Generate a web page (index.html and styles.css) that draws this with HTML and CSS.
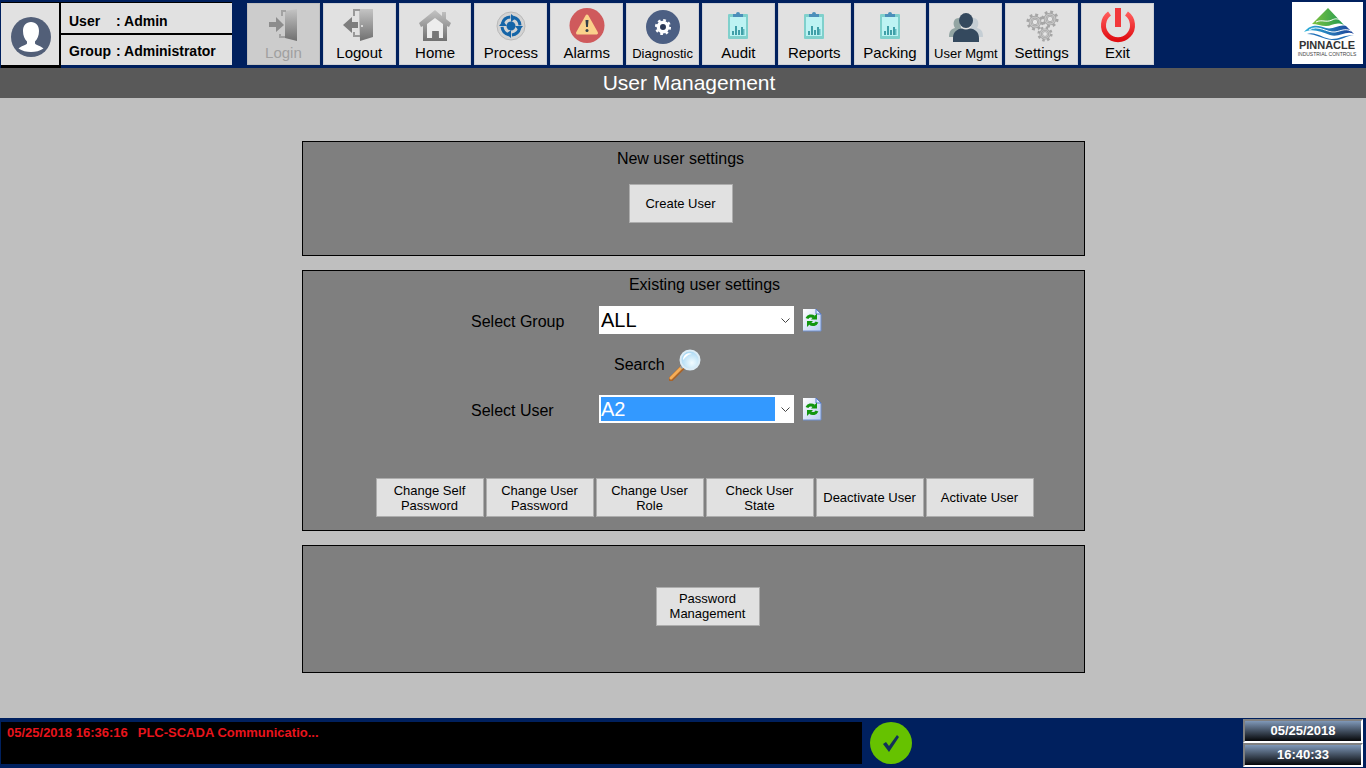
FILE: index.html
```html
<!DOCTYPE html>
<html lang="en">
<head>
    <meta charset="UTF-8">
    <meta name="viewport" content="width=device-width, initial-scale=1.0">
    <title>User Management</title>
    <link rel="stylesheet" href="styles.css">
</head>
<body>
    <!-- shared gradients and icons -->
    <svg class="defs" width="0" height="0" aria-hidden="true">
        <defs>
            <linearGradient id="grey" x1="0" y1="0" x2="0" y2="1">
                <stop offset="0" stop-color="#c4c4c4"/>
                <stop offset="1" stop-color="#707070"/>
            </linearGradient>
            <linearGradient id="red" x1="0" y1="0" x2="0" y2="1">
                <stop offset="0" stop-color="#ff5a5a"/>
                <stop offset="1" stop-color="#e00d12"/>
            </linearGradient>
            <linearGradient id="page" x1="0" y1="0" x2="1" y2="1">
                <stop offset="0" stop-color="#ffffff"/>
                <stop offset="1" stop-color="#b9cdf2"/>
            </linearGradient>
            <radialGradient id="lens" cx="0.6" cy="0.65" r="0.7">
                <stop offset="0" stop-color="#f2fcff"/>
                <stop offset="1" stop-color="#9fd3f2"/>
            </radialGradient>
            <linearGradient id="peak" x1="0" y1="0" x2="1" y2="0">
                <stop offset="0" stop-color="#7fc241"/>
                <stop offset="1" stop-color="#1f9a50"/>
            </linearGradient>
            <linearGradient id="wave" x1="0" y1="0" x2="1" y2="0">
                <stop offset="0" stop-color="#2fb3dc"/>
                <stop offset="1" stop-color="#1c3f96"/>
            </linearGradient>
            <symbol id="clipboard" viewBox="0 0 40 38">
                <rect x="10" y="8" width="20" height="25" rx="1" fill="#7fd0cc"/>
                <rect x="12" y="11" width="16" height="19" fill="#bdf3f3"/>
                <path d="M15 8h3a2 2 0 0 1 4 0h3v3H15z" fill="#4b8fba"/>
                <path d="M14 25h2v4h-2zM17 20h2v9h-2zM20 24h2v5h-2zM23 21h2v8h-2z" fill="#3f9fa8"/>
                <path d="M25 23h1.500v6H25z" fill="#62bcc0"/>
            </symbol>
            <symbol id="refresh" viewBox="0 0 20 24">
                <path d="M1 1h13l5 5v17H1z" fill="url(#page)"/>
                <path d="M1 23h18V6" fill="none" stroke="#6f8fd0"/>
                <path d="M14 1v5h5z" fill="#dbe7ff" stroke="#5478c8"/>
                <path d="M5 10.500c1-2.500 4.500-3.500 7-1.500" fill="none" stroke="#12960f" stroke-width="3"/>
                <path d="M15 5.500v6H9z" fill="#12960f"/>
                <path d="M15 14c-1 2.500-4.500 3.500-7 1.500" fill="none" stroke="#12960f" stroke-width="3"/>
                <path d="M5 19v-6h6z" fill="#12960f"/>
            </symbol>
            <symbol id="gear" viewBox="0 0 20 20">
                <circle cx="10" cy="10" r="8" fill="none" stroke="currentColor" stroke-width="3" stroke-dasharray="3.140 3.140"/>
                <circle cx="10" cy="10" r="5.500" fill="none" stroke="currentColor" stroke-width="4"/>
            </symbol>
            <symbol id="cog" viewBox="0 0 20 20">
                <circle cx="10" cy="10" r="8" fill="none" stroke="#a6a6a6" stroke-width="3" stroke-dasharray="3.140 3.140"/>
                <circle cx="10" cy="10" r="5.500" fill="#cfcfcf" stroke="#a0a0a0" stroke-width="3"/>
                <circle cx="10" cy="10" r="5.500" fill="none" stroke="#c6c6c6" stroke-width="1.500"/>
                <circle cx="10" cy="10" r="3" fill="#e6e6e6" stroke="#a8a8a8"/>
            </symbol>
        </defs>
    </svg>

    <header class="topbar">
        <div class="user-card">
            <div class="avatar">
                <svg width="40" height="40" viewBox="0 0 40 40">
                    <circle cx="20" cy="20" r="20" fill="#525f78"/>
                    <path d="M20 5c5 0 8 3.500 8 9 0 4.500-1.500 8-4 10.500v2c1.500 1.800 6 2.500 8.500 5C29 34 24.500 35 20 35S11 34 7.500 31.500c2.500-2.500 7-3.200 8.500-5v-2c-2.500-2.500-4-6-4-10.500 0-5.500 3-9 8-9z" fill="#fff"/>
                </svg>
            </div>
            <div class="user-info">
                <p><span class="key">User</span>: Admin</p>
                <p><span class="key">Group</span>: Administrator</p>
            </div>
        </div>

        <nav class="menu">
            <button type="button" disabled>
                <svg viewBox="0 0 40 38">
                    <path d="M6 16h7v-5l8 8-8 7v-5H6z" fill="#8c8c8c"/>
                    <path d="M22 5l12-2v32l-12-3z" fill="url(#grey)"/>
                    <path d="M19 10V5h4M17 28v3h5" fill="none" stroke="#a2a2a2" stroke-width="2"/>
                </svg>
                Login
            </button>
            <button type="button">
                <svg viewBox="0 0 40 38">
                    <path d="M19 16h-6v-5l-9 8 9 8v-5h6z" fill="#7d7d7d"/>
                    <path d="M20 3h14v28l-13 4z" fill="url(#grey)"/>
                    <path d="M15 10V4h6M15 26v4h6" fill="none" stroke="#999" stroke-width="2"/>
                    <circle cx="23" cy="20" r="1" fill="#eee"/>
                </svg>
                Logout
            </button>
            <button type="button">
                <svg viewBox="0 0 40 38">
                    <path d="M20 4L4 17l2 4 2-1v15h24V20l2 1 2-4-5-4V6h-4v4z" fill="url(#grey)"/>
                    <path d="M20 12l-8 6v14h5v-7h7v7h4V18z" fill="#ededed"/>
                    <path d="M18 25h5v7h-5z" fill="#777"/>
                </svg>
                Home
            </button>
            <button type="button">
                <svg viewBox="0 0 40 38">
                    <circle cx="20" cy="20" r="14" fill="#d3d3d3" stroke="#b9b9b9" stroke-width="1"/>
                    <circle cx="20" cy="20" r="9" fill="none" stroke="#1565a8" stroke-width="3" stroke-dasharray="11.140 3" stroke-dashoffset="-2"/>
                    <path d="M20 8l5 4-5 4zM32 20l-4 5-4-5zM20 32l-5-4 5-4zM8 20l4-5 4 5z" fill="#1565a8"/>
                    <circle cx="20" cy="20" r="4.500" fill="#1565a8"/>
                </svg>
                Process
            </button>
            <button type="button">
                <svg viewBox="0 0 40 38">
                    <circle cx="20" cy="19.500" r="17.500" fill="#cf5a5c"/>
                    <path d="M20 10l9.500 17h-19z" fill="#fbd18b" stroke="#fbd18b" stroke-width="3" stroke-linejoin="round"/>
                    <path d="M18.500 14h3l-.6 7h-1.800z" fill="#333f48"/>
                    <circle cx="20" cy="24.500" r="1.500" fill="#333f48"/>
                </svg>
                Alarms
            </button>
            <button type="button" class="small">
                <svg viewBox="0 0 40 38">
                    <circle cx="20" cy="21" r="17" fill="#4c5f83"/>
                    <circle cx="20" cy="21" r="4" fill="#2b3856"/>
                    <use href="#gear" x="11.500" y="12.500" width="17" height="17" color="#fff"/>
                </svg>
                Diagnostic
            </button>
            <button type="button">
                <svg viewBox="0 0 40 38"><use href="#clipboard" width="40" height="38"/></svg>
                Audit
            </button>
            <button type="button">
                <svg viewBox="0 0 40 38"><use href="#clipboard" width="40" height="38"/></svg>
                Reports
            </button>
            <button type="button">
                <svg viewBox="0 0 40 38"><use href="#clipboard" width="40" height="38"/></svg>
                Packing
            </button>
            <button type="button" class="small">
                <svg viewBox="0 0 40 38">
                    <path d="M3 31c0-6 2-8 6-9-3-5-1-10 4-10l4 19z" fill="#93a5a3"/>
                    <path d="M37 31c0-6-2-8-6-9 3-5 1-10-4-10l-4 19z" fill="#c5ced4"/>
                    <ellipse cx="20" cy="14.500" rx="7" ry="7.500" fill="#34495e"/>
                    <path d="M7 36v-4c0-6 4-9 9-9.500q4 2 8 0c5 .5 9 3.500 9 9.500v4z" fill="#34495e"/>
                </svg>
                User Mgmt
            </button>
            <button type="button">
                <svg viewBox="0 0 40 38">
                    <use href="#cog" x="4" y="7" width="18" height="18"/>
                    <use href="#cog" x="19" y="4" width="18" height="18"/>
                    <use href="#cog" x="15" y="20" width="16" height="16"/>
                </svg>
                Settings
            </button>
            <button type="button">
                <svg viewBox="0 0 40 38">
                    <path d="M11.500 7.500a14.500 14.500 0 1 0 17 0" fill="none" stroke="url(#red)" stroke-width="5"/>
                    <path d="M17 2h6v19h-6z" fill="#f2383b"/>
                </svg>
                Exit
            </button>
        </nav>

        <div class="logo">
            <svg width="71" height="62" viewBox="0 0 71 62" role="img" aria-label="Pinnacle Industrial Controls">
                <path d="M36 6l16 17c-8-4-12 1-18 1-5 0-9-2-14-2z" fill="url(#peak)"/>
                <path d="M24 20c6-3 10 1 16-2 4-2 6-1 8 0" fill="none" stroke="#fff" stroke-width="1"/>
                <path d="M12 30c8-9 15-6 22-4 7 2 13-4 20-2l8 8c-8-4-15 4-24 1-9-3-17-7-26-3z" fill="url(#wave)"/>
                <path d="M15 32c9-3 16 5 25 5 7 0 12-4 22-4-9 1-13 6-22 5-9-1-16-6-25-6z" fill="#1f6fb8"/>
                <path d="M17 28c9-6 18 3 26 2 6-1 10-4 16-1" fill="none" stroke="#fff" stroke-width="1"/>
                <text x="35" y="47" class="logo-name">PINNACLE</text>
                <text x="35" y="54" class="logo-sub">INDUSTRIAL CONTROLS</text>
            </svg>
        </div>
    </header>

    <h1>User Management</h1>

    <main>
        <section class="panel new-user">
            <h2>New user settings</h2>
            <button type="button" class="btn">Create User</button>
        </section>

        <section class="panel existing-user">
            <h2>Existing user settings</h2>
            <form class="filters">
                <label for="group">Select Group</label>
                <div class="combo">
                    <select id="group">
                        <option selected>ALL</option>
                    </select>
                    <svg width="9" height="6" viewBox="0 0 9 6"><path d="M.5.500l4 4 4-4" fill="none" stroke="#444"/></svg>
                </div>
                <button type="button" class="icon-btn" aria-label="Refresh groups">
                    <svg width="20" height="24"><use href="#refresh"/></svg>
                </button>

                <button type="button" class="icon-btn search">
                    Search
                    <svg width="32" height="32" viewBox="0 0 32 32">
                        <path d="M2 30l11-11" stroke="#a8642a" stroke-width="5" stroke-linecap="round"/>
                        <path d="M2 29l11-11" stroke="#f5ad57" stroke-width="3" stroke-linecap="round"/>
                        <path d="M12 19l3-3" stroke="#8d9aa5" stroke-width="3"/>
                        <circle cx="21" cy="11" r="9.500" fill="url(#lens)" stroke="#dcecf5" stroke-width="2"/>
                        <path d="M14 11c0-5 5-8 9-6-4 0-6 3-9 6z" fill="#fff"/>
                    </svg>
                </button>

                <label for="user">Select User</label>
                <div class="combo">
                    <select id="user" class="active">
                        <option selected>A2</option>
                    </select>
                    <svg width="9" height="6" viewBox="0 0 9 6"><path d="M.5.500l4 4 4-4" fill="none" stroke="#444"/></svg>
                </div>
                <button type="button" class="icon-btn" aria-label="Refresh users">
                    <svg width="20" height="24"><use href="#refresh"/></svg>
                </button>
            </form>
            <div class="actions">
                <button type="button" class="btn">Change Self Password</button>
                <button type="button" class="btn">Change User Password</button>
                <button type="button" class="btn">Change User Role</button>
                <button type="button" class="btn">Check User State</button>
                <button type="button" class="btn">Deactivate User</button>
                <button type="button" class="btn">Activate User</button>
            </div>
        </section>

        <section class="panel password">
            <button type="button" class="btn">Password Management</button>
        </section>
    </main>

    <footer class="statusbar">
        <div class="alarm-line">
            <span>05/25/2018 16:36:16</span>
            <span>PLC-SCADA Communicatio...</span>
        </div>
        <svg class="ok" width="42" height="42" viewBox="0 0 42 42" role="img" aria-label="OK">
            <circle cx="21" cy="21" r="21" fill="#66c200"/>
            <path d="M13 22l3-2 3 4 8-11 2 2-10 15z" fill="#12305a"/>
        </svg>
        <div class="clock">
            <span>05/25/2018</span>
            <span>16:40:33</span>
        </div>
    </footer>
</body>
</html>
```
FILE: styles.css
```css
* {
    box-sizing: border-box;
}
body {
    margin: 0;
    min-height: 100vh;
    display: flex;
    flex-direction: column;
    font-family: "Liberation Sans", Arial, sans-serif;
    font-size: 16px;
    color: black;
    background-color: #bfbfbf;
}
h1, h2, p {
    margin: 0;
    font-weight: normal;
}
button {
    font-family: inherit;
    color: black;
    cursor: pointer;
}
.defs {
    position: absolute;
}

/* top bar */
.topbar {
    display: flex;
    align-items: flex-start;
    height: 68px;
    padding: 2px 3px 0 1px;
    background: #00205e;
}
.user-card {
    display: flex;
    width: 231px;
    height: 66px;
    margin-right: 15px;
    background: linear-gradient(to right, black 60px, #00205e 60px);
}
.avatar {
    display: flex;
    align-items: center;
    justify-content: center;
    width: 58px;
    height: 62px;
    padding: 6px 0 0 2px;
    margin: 1px 2px 0 0;
    background: #e1e1e1;
}
.user-info {
    flex: 1;
    display: flex;
    flex-direction: column;
    gap: 2px;
    height: 63px;
    padding-top: 1px;
    background: black;
}
.user-info p {
    height: 30px;
    padding-left: 8px;
    font-size: 14px;
    font-weight: bold;
    line-height: 32px;
    background: #e1e1e1;
}
.user-info p:first-child {
    line-height: 36px;
}
.key {
    display: inline-block;
    width: 47px;
}
.menu {
    display: flex;
    gap: 3px;
    width: 907px;
    padding-top: 1px;
}
.menu button {
    flex: 1 1 0;
    min-width: 0;
    height: 62px;
    display: flex;
    flex-direction: column;
    align-items: center;
    padding: 2px 0 0;
    border: 1px solid #cdd0d6;
    background: #e1e1e1;
    font-size: 15px;
    line-height: 18px;
    white-space: nowrap;
}
.menu button:disabled {
    background: #cccccc;
    border-color: #bfbfbf;
    color: #a0a0a0;
    cursor: default;
}
.menu .small {
    font-size: 13px;
    line-height: 20px;
}
.menu svg {
    width: 40px;
    height: 38px;
    flex: none;
}
.logo {
    height: 62px;
    margin-left: auto;
    background: white;
}
.logo svg {
    display: block;
}
.logo-name {
    font-size: 11px;
    font-weight: bold;
    text-anchor: middle;
    fill: #333;
}
.logo-sub {
    font-size: 5px;
    text-anchor: middle;
    fill: #444;
}

h1 {
    height: 30px;
    padding-left: 12px;
    font-size: 21px;
    line-height: 30px;
    text-align: center;
    color: white;
    background: #595959;
}

/* panels */
main {
    flex: 1;
    display: flex;
    flex-direction: column;
    gap: 14px;
    padding: 43px 281px 44px 302px;
}
.panel {
    display: flex;
    flex-direction: column;
    align-items: center;
    border: 1px solid black;
    background: #7f7f7f;
}
.panel h2 {
    font-size: 16px;
    line-height: 20px;
}
.btn {
    width: 104px;
    height: 39px;
    padding: 0 8px 2px;
    border: 1px solid #adadad;
    background: #e1e1e1;
    font-size: 13px;
    line-height: 15px;
}
.new-user {
    gap: 15px;
    height: 115px;
    padding: 7px 26px 0 0;
}
.new-user .btn {
    padding-bottom: 0;
}
.existing-user {
    height: 261px;
    padding: 4px 0 0 22px;
}
.password {
    height: 128px;
    padding: 41px 0 0 28px;
}
.filters {
    align-self: flex-start;
    display: grid;
    grid-template-columns: 128px 195px 28px;
    row-gap: 14px;
    align-items: center;
    margin: 11px 0 0 146px;
}
.filters label {
    padding-top: 4px;
}
.combo {
    position: relative;
}
.combo select {
    display: block;
    width: 100%;
    height: 28px;
    padding: 0;
    border: 2px solid white;
    border-radius: 0;
    appearance: none;
    background: white;
    font-family: inherit;
    font-size: 20px;
    color: black;
}
.combo select.active {
    color: white;
    background: linear-gradient(to left, white 17px, #3399ff 17px);
}
.combo svg {
    position: absolute;
    right: 4px;
    top: 12px;
    pointer-events: none;
}
.icon-btn {
    padding: 0;
    border: none;
    background: none;
    font-size: 16px;
}
.icon-btn svg {
    display: block;
}
.filters > .icon-btn {
    margin-left: 8px;
}
.filters > .search {
    grid-column: 2 / 4;
    justify-self: start;
    display: flex;
    align-items: center;
    gap: 4px;
    margin-left: 15px;
    padding-top: 1px;
}
.actions {
    display: flex;
    gap: 2px;
    margin-top: 55px;
}
.actions .btn {
    width: 108px;
    padding: 0 6px;
}

/* bottom bar */
.statusbar {
    display: flex;
    align-items: center;
    height: 50px;
    padding: 0 3px 0 1px;
    background: #00205e;
}
.alarm-line {
    flex: 0 1 861px;
    display: flex;
    gap: 10px;
    height: 42px;
    padding: 3px 6px;
    background: black;
    color: #e8141c;
    font-size: 13px;
    font-weight: bold;
    line-height: 15px;
    white-space: nowrap;
}
.ok {
    margin-left: 8px;
    flex: none;
}
.clock {
    width: 120px;
    margin-left: auto;
}
.clock span {
    display: block;
    height: 24px;
    border: 2px solid;
    border-color: #808080 white white #808080;
    background: linear-gradient(#7f98b8, #050608);
    color: white;
    font-size: 13px;
    font-weight: bold;
    line-height: 20px;
    text-align: center;
}
```
